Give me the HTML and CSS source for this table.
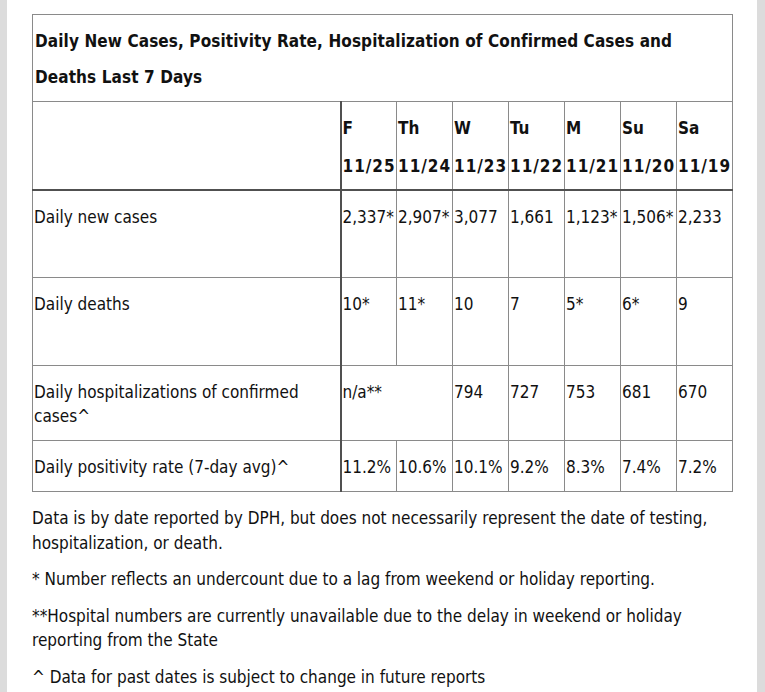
FILE: index.html
```html
<!DOCTYPE html>
<html>
<head>
<meta charset="utf-8">
<link rel="stylesheet" href="styles.css">
</head>
<body>
<div class="page">
  <table class="stats">
    <colgroup>
      <col class="c-label">
      <col class="c-day"><col class="c-day"><col class="c-day"><col class="c-day"><col class="c-day"><col class="c-day"><col class="c-day">
    </colgroup>
    <tr class="r-title">
      <th colspan="8">Daily New Cases, Positivity Rate, Hospitalization of Confirmed Cases and Deaths Last 7 Days</th>
    </tr>
    <tr class="r-head">
      <th class="lab"></th>
      <th>F<br><span class="date">11/25</span></th>
      <th>Th<br><span class="date">11/24</span></th>
      <th>W<br><span class="date">11/23</span></th>
      <th>Tu<br><span class="date">11/22</span></th>
      <th>M<br><span class="date">11/21</span></th>
      <th>Su<br><span class="date">11/20</span></th>
      <th>Sa<br><span class="date">11/19</span></th>
    </tr>
    <tr class="r-tall">
      <td class="lab">Daily new cases</td>
      <td>2,337*</td><td>2,907*</td><td>3,077</td><td>1,661</td><td>1,123*</td><td>1,506*</td><td>2,233</td>
    </tr>
    <tr class="r-tall r-second">
      <td class="lab">Daily deaths</td>
      <td>10*</td><td>11*</td><td>10</td><td>7</td><td>5*</td><td>6*</td><td>9</td>
    </tr>
    <tr class="r-mid">
      <td class="lab">Daily hospitalizations of confirmed cases^</td>
      <td colspan="2">n/a**</td><td>794</td><td>727</td><td>753</td><td>681</td><td>670</td>
    </tr>
    <tr class="r-short">
      <td class="lab">Daily positivity rate (7-day avg)^</td>
      <td>11.2%</td><td>10.6%</td><td>10.1%</td><td>9.2%</td><td>8.3%</td><td>7.4%</td><td>7.2%</td>
    </tr>
  </table>
  <div class="notes">
    <p>Data is by date reported by DPH, but does not necessarily represent the date of testing, hospitalization, or death.</p>
    <p>* Number reflects an undercount due to a lag from weekend or holiday reporting.</p>
    <p>**Hospital numbers are currently unavailable due to the delay in weekend or holiday reporting from the State</p>
    <p>^ Data for past dates is subject to change in future reports</p>
  </div>
</div>
</body>
</html>
```

FILE: styles.css
```css
html, body {
  margin: 0;
  padding: 0;
  background: #dcdcdc;
}
.page {
  margin-left: 7px;
  width: 725px;
  min-height: 692px;
  background: #ffffff;
  padding: 14px 0 0 25px;
  box-sizing: content-box;
  font-family: "DejaVu Sans Condensed", "DejaVu Sans", sans-serif;
  font-stretch: condensed;
  color: #111;
}
.stats {
  border-collapse: collapse;
  width: 700px;
  table-layout: fixed;
  font-size: 17px;
}
.c-label { width: 308px; }
.c-day { width: 56px; }
.stats th, .stats td {
  border: 1px solid #8a8a8a;
  text-align: left;
  vertical-align: top;
  padding: 0 0 0 1px;
  white-space: nowrap;
}
.stats td.lab { white-space: normal; }
.r-title th {
  font-weight: bold;
  font-size: 17px;
  letter-spacing: 0.1px;
  line-height: 36px;
  padding: 8px 0 6px 2px;
  white-space: normal;
  height: 72px;
}
.r-head th {
  font-size: 17px;
  line-height: 38px;
  padding-top: 7px;
  height: 80px;
}
.r-head .date {
  letter-spacing: 1px;
}
.stats td.lab, .stats .r-head .lab { border-right: 2px solid #505050; }
.r-head th { border-bottom: 2px solid #505050; }
.stats td {
  line-height: 24px;
  padding-top: 14px;
}
.r-tall td { height: 72px; }
.r-second td { height: 73px; }
.r-mid td { height: 60px; }
.r-short td { height: 36px; }
.notes {
  width: 700px;
  font-size: 17px;
  line-height: 24.5px;
}
.notes p {
  margin: 12px 0;
}
.notes p:first-child {
  margin-top: 14px;
}
```
